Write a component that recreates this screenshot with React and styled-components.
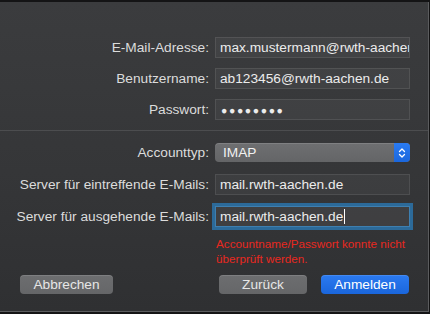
import React from "react";
import styled, { createGlobalStyle } from "styled-components";

const GlobalStyle = createGlobalStyle`
  html, body { margin: 0; padding: 0; background: #141415; }
  body { font-family: "Liberation Sans", Arial, sans-serif; -webkit-font-smoothing: antialiased; }
`;

const Sheet = styled.div`
  box-sizing: border-box;
  margin-top: 2px;
  width: 429px;
  height: 310px;
  background: linear-gradient(180deg, #3b3c3e 0%, #353638 55%, #2f3032 100%);
  border-right: 1px solid #5b5c5e;
  border-bottom: 1px solid #5b5c5e;
  display: flex;
  flex-direction: column;
  color: #dedede;
  font-size: 13.7px;
`;

const FormGrid = styled.div`
  display: grid;
  grid-template-columns: 209px 195px;
  column-gap: 6px;
  row-gap: ${(p) => p.$gap}px;
  padding-top: ${(p) => p.$top}px;
  align-items: center;
`;

const Label = styled.label`
  text-align: right;
  white-space: nowrap;
  color: #dcdcdc;
  line-height: 21px;
`;

const Field = styled.div`
  box-sizing: border-box;
  height: 21px;
  padding: 0 4px;
  display: flex;
  align-items: center;
  background: rgba(255, 255, 255, 0.045);
  border: 1px solid rgba(255, 255, 255, 0.09);
  color: #ececec;
  white-space: nowrap;
  overflow: hidden;
  font-size: 13.7px;
  ${(p) =>
    p.$focused &&
    `
    box-shadow: 0 0 0 3px #2c6a99;
    border-color: #3e7fb0;
    background: rgba(255,255,255,0.06);
  `}
`;

const Dots = styled.span`
  letter-spacing: 1.6px;
  font-size: 10.5px;
  padding-left: 1px;
`;

const Caret = styled.span`
  display: inline-block;
  width: 1px;
  height: 15px;
  background: #ffffff;
  margin-left: 1px;
`;

const Separator = styled.div`
  height: 1px;
  margin-top: 10px;
  background: #4c4d4f;
`;

const Popup = styled.div`
  box-sizing: border-box;
  height: 19px;
  display: flex;
  align-items: stretch;
  border-radius: 4px;
  background: linear-gradient(180deg, #6e6f71, #646567);
  box-shadow: inset 0 1px 0 rgba(255, 255, 255, 0.12);
  overflow: hidden;
`;

const PopupText = styled.span`
  flex: 1;
  padding-left: 8px;
  line-height: 19px;
  color: #f2f2f2;
  font-size: 13.7px;
`;

const Stepper = styled.span`
  width: 16px;
  background: linear-gradient(180deg, #2a7bf2, #1b67dd);
  display: flex;
  align-items: center;
  justify-content: center;
`;

const ErrorText = styled.div`
  grid-column: 2;
  margin-top: -2px;
  color: #e8281f;
  font-size: 11.7px;
  line-height: 15px;
  padding-left: 1px;
`;

const ButtonRow = styled.div`
  display: flex;
  justify-content: space-between;
  align-items: center;
  padding: 0 19px 0 20px;
  margin-top: 9px;
`;

const Group = styled.div`
  display: flex;
  gap: 14px;
`;

const Button = styled.button`
  box-sizing: border-box;
  width: ${(p) => p.$w}px;
  height: 19px;
  padding: 0;
  border: none;
  border-radius: 4px;
  font-family: inherit;
  font-size: 13.7px;
  color: ${(p) => (p.$primary ? "#ffffff" : "#e6e6e6")};
  background: ${(p) =>
    p.$primary
      ? "linear-gradient(180deg, #2b7af0, #1a66dc)"
      : "linear-gradient(180deg, #6d6e70, #656668)"};
  box-shadow: inset 0 1px 0 rgba(255, 255, 255, 0.12);
`;

export default function App() {
  return (
    <>
      <GlobalStyle />
      <Sheet>
        <FormGrid $top={35} $gap={10}>
          <Label>E-Mail-Adresse:</Label>
          <Field>max.mustermann@rwth-aachen.de</Field>
          <Label>Benutzername:</Label>
          <Field>ab123456@rwth-aachen.de</Field>
          <Label>Passwort:</Label>
          <Field>
            <Dots>●●●●●●●●</Dots>
          </Field>
        </FormGrid>
        <Separator />
        <FormGrid $top={11} $gap={11}>
          <Label>Accounttyp:</Label>
          <Popup>
            <PopupText>IMAP</PopupText>
            <Stepper>
              <svg width="8" height="12" viewBox="0 0 8 12" fill="none" stroke="#fff" strokeWidth="1.3" strokeLinecap="round" strokeLinejoin="round">
                <path d="M1.5 4.5 L4 2 L6.5 4.5" />
                <path d="M1.5 7.5 L4 10 L6.5 7.5" />
              </svg>
            </Stepper>
          </Popup>
          <Label>Server für eintreffende E-Mails:</Label>
          <Field>mail.rwth-aachen.de</Field>
          <Label>Server für ausgehende E-Mails:</Label>
          <Field $focused>
            mail.rwth-aachen.de<Caret />
          </Field>
          <ErrorText>
            Accountname/Passwort konnte nicht
            <br />
            überprüft werden.
          </ErrorText>
        </FormGrid>
        <ButtonRow>
          <Button $w={93}>Abbrechen</Button>
          <Group>
            <Button $w={88}>Zurück</Button>
            <Button $w={88} $primary>Anmelden</Button>
          </Group>
        </ButtonRow>
      </Sheet>
    </>
  );
}
